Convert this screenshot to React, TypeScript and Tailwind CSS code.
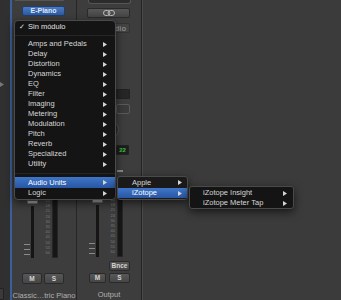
import React from "react";

const font = "font-['Liberation_Sans',Arial,sans-serif]";

function Arrow() {
  return (
    <svg width="4" height="5" viewBox="0 0 4 5" className="shrink-0">
      <path d="M0 0L4 2.5L0 5Z" fill="#d4d4d4" />
    </svg>
  );
}

function MenuRow({
  label,
  active = false,
  arrow = true,
  h = "h-[10px]",
  pl = "pl-[13px]",
  pr = "pr-[8px]",
}: {
  label: string;
  active?: boolean;
  arrow?: boolean;
  h?: string;
  pl?: string;
  pr?: string;
}) {
  return (
    <div
      className={`flex ${h} items-center ${pl} ${pr} ${
        active ? "bg-linear-to-b from-[#3f76c8] to-[#2856a3] text-white" : "text-[#d6d6d6]"
      }`}
    >
      <span className="flex-1 whitespace-nowrap">{label}</span>
      {arrow && <Arrow />}
    </div>
  );
}

function SmallButton({ label, className }: { label: string; className: string }) {
  return (
    <div
      className={`flex items-center justify-center rounded-[2px] border border-[#2a2a2a] bg-linear-to-b from-[#585858] to-[#464646] text-[6.5px] font-bold text-[#d4d4d4] ${className}`}
    >
      {label}
    </div>
  );
}

function FaderRow({ scale }: { scale: string[] }) {
  return (
    <div className="flex h-[62px] pl-[12px]">
      <div className="flex w-[6px] flex-col justify-end gap-[4px] pb-[3px]">
        <div className="h-px bg-[#8a8a8a]" />
        <div className="h-px bg-[#8a8a8a]" />
        <div className="h-px bg-[#8a8a8a]" />
      </div>
      <div className="relative ml-[1px] mt-[10px] w-[3px] bg-[#151515]">
        <div className="absolute -left-[4px] -top-[10px] flex h-[8px] w-[11px] flex-col justify-center rounded-[1px] border border-[#666] bg-linear-to-b from-[#e8e8e8] to-[#9c9c9c]">
          <div className="h-px bg-[#555]" />
        </div>
      </div>
      <div className="ml-[9px] flex w-[7px] flex-col justify-between py-[3px] text-right text-[4px] leading-none text-[#7a7a7a]">
        {scale.map((s) => (
          <span key={s}>{s}</span>
        ))}
      </div>
      <div className="ml-[2px] w-[6px] border border-[#262626] bg-[#161616]" />
    </div>
  );
}

export default function App() {
  const scale = ["12", "18", "21", "24", "30", "35", "40", "45", "50", "55", "60"];
  return (
    <div className={`relative flex h-[300px] w-[341px] overflow-hidden bg-[#3c3c3c] ${font}`}>
      {/* left strip */}
      <div className="flex w-[10px] flex-col bg-[#303030]">
        <svg width="4" height="5" viewBox="0 0 4 5" className="mt-[82px]">
          <path d="M0 0L4 2.5L0 5Z" fill="#777" />
        </svg>
        <div className="mt-auto h-[12px] w-[4px] rounded-r-[2px] border border-l-0 border-[#222] bg-[#3a3a3a]" />
      </div>
      <div className="w-[2px] bg-[#3b5e9c]" />

      {/* channel 1 */}
      <div className="flex w-[64px] flex-col bg-[#3d3d3d]">
        <div className="ml-[3px] h-[3px] w-[49px] rounded-b-[3px] border border-t-0 border-[#555] bg-[#2c2c2c]" />
        <div className="ml-[10px] mt-[5px] flex h-[10px] w-[43px] items-center justify-center rounded-[2px] border border-[#1f3d70] bg-linear-to-b from-[#4b7ac2] to-[#2e5a9e] text-[7px] font-bold text-[#dde6f5]">
          E-Piano
        </div>
        <div className="mt-[180px]">
          <FaderRow scale={scale} />
        </div>
        <div className="ml-[10px] mt-[15px] flex gap-[2px]">
          <SmallButton label="M" className="h-[11px] w-[20px]" />
          <SmallButton label="S" className="h-[11px] w-[20px]" />
        </div>
        <div className="mt-[7px] whitespace-nowrap text-center text-[7.5px] leading-[10px] text-[#b0b0b0]">
          Classic…tric Piano
        </div>
      </div>
      <div className="w-px bg-[#262626]" />

      {/* channel 2 */}
      <div className="flex w-[64px] flex-col bg-[#3d3d3d]">
        <div className="ml-[11px] h-[4px] w-[43px] rounded-b-[3px] border border-t-0 border-[#555] bg-[#2c2c2c]" />
        <div className="ml-[10px] mt-[4px] flex h-[11px] w-[43px] items-center justify-center rounded-[2px] border border-[#2a2a2a] bg-linear-to-b from-[#575757] to-[#444]">
          <svg width="12" height="6" viewBox="0 0 12 6">
            <rect x="0.5" y="0.5" width="6.5" height="5" rx="2.5" fill="none" stroke="#bbb" strokeWidth="1" />
            <rect x="5" y="0.5" width="6.5" height="5" rx="2.5" fill="none" stroke="#bbb" strokeWidth="1" />
          </svg>
        </div>
        <div className="ml-[10px] mt-[5px] flex h-[10px] w-[43px] items-center justify-end rounded-[2px] border border-[#333] bg-[#444] pr-[3px] text-[7.5px] font-bold text-[#8a8a8a]">
          Audio
        </div>
        <div className="ml-[39px] mt-[56px] h-[10px] w-[14px] rounded-[1px] border border-[#222] bg-[#262626]" />
        <div className="ml-[39px] mt-[5px] h-[11px] w-[14px] rounded-[2px] border border-[#5a5a5a] bg-[#3a3a3a]" />
        <div className="ml-[22px] mt-[6px] h-[20px] w-[20px] rounded-full border border-[#555] bg-[#2e2e2e]" />
        <div className="ml-[39px] mt-[6px] flex h-[10px] w-[13px] items-center justify-center rounded-[1px] border border-[#222] bg-[#1d1d1d] text-[6px] font-bold text-[#3fc33f]">
          22
        </div>
        <div className="ml-[40px] mt-[15px] h-[2px] w-[6px] bg-[#8a8a8a]" />
        <div className="mt-[23px]">
          <FaderRow scale={scale} />
        </div>
        <SmallButton label="Bnce" className="ml-[32px] mt-[4px] h-[10px] w-[21px]" />
        <div className="ml-[12px] mt-[2px] flex gap-[3px]">
          <SmallButton label="M" className="h-[10px] w-[17px]" />
          <SmallButton label="S" className="h-[10px] w-[21px]" />
        </div>
        <div className="mt-[7px] whitespace-nowrap text-center text-[7.5px] leading-[10px] text-[#b0b0b0]">
          Output
        </div>
      </div>
      <div className="w-px bg-[#242424]" />
      <div className="w-px bg-[#4a4a4a]" />

      {/* empty area */}
      <div className="flex-1 bg-[#3b3b3b]" />

      {/* plug-in menu */}
      <div className="absolute left-[14px] top-[20px] flex h-[180px] w-[102px] flex-col rounded-[4px] border border-[#4a4a4a] bg-[#141414] pt-[1px] text-[7.5px] shadow-[0_3px_8px_rgba(0,0,0,0.6)]">
        <div className="flex h-[10px] items-center pl-[4px] text-[#e0e0e0]">
          <span className="w-[9px] text-[7px]">✓</span>
          <span>Sin módulo</span>
        </div>
        <div className="flex h-[7px] items-center">
          <div className="h-px w-full bg-[#262626]" />
        </div>
        {[
          "Amps and Pedals",
          "Delay",
          "Distortion",
          "Dynamics",
          "EQ",
          "Filter",
          "Imaging",
          "Metering",
          "Modulation",
          "Pitch",
          "Reverb",
          "Specialized",
          "Utility",
        ].map((l) => (
          <MenuRow key={l} label={l} />
        ))}
        <div className="flex h-[8px] items-center">
          <div className="h-px w-full bg-[#262626]" />
        </div>
        <MenuRow label="Audio Units" active h="h-[11px]" />
        <MenuRow label="Logic" />
      </div>

      {/* Audio Units submenu */}
      <div className="absolute left-[117px] top-[176px] flex h-[24px] w-[71px] flex-col rounded-[3px] border border-[#4a4a4a] bg-[#1a1a1a] text-[7.5px] shadow-[0_3px_8px_rgba(0,0,0,0.6)]">
        <MenuRow label="Apple" h="h-[11px]" pl="pl-[14px]" pr="pr-[5px]" />
        <MenuRow label="iZotope" active pl="pl-[14px]" pr="pr-[5px]" />
      </div>

      {/* iZotope submenu */}
      <div className="absolute left-[189px] top-[186px] flex h-[23px] w-[105px] flex-col rounded-[3px] border border-[#4a4a4a] bg-[#141414] pt-[1px] text-[7.5px] shadow-[0_3px_8px_rgba(0,0,0,0.6)]">
        <MenuRow label="iZotope Insight" pl="pl-[13px]" pr="pr-[6px]" />
        <MenuRow label="iZotope Meter Tap" pl="pl-[13px]" pr="pr-[6px]" />
      </div>
    </div>
  );
}
